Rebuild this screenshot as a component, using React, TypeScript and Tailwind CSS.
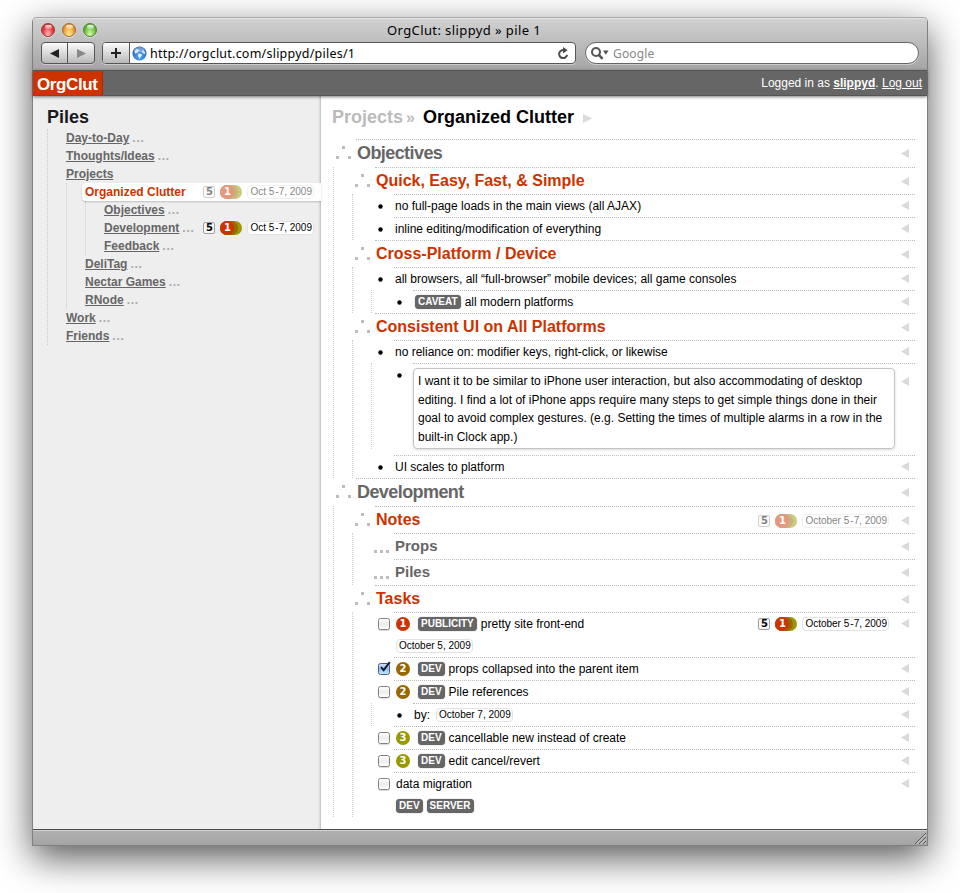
import type { ReactNode } from "react";
import clsx from "clsx";

/* ---------- small pieces ---------- */

function Light({ className }: { className: string }) {
  return (
    <span
      className={clsx(
        "block h-[14px] w-[14px] rounded-full border shadow-[0_1px_0_rgba(255,255,255,0.5)]",
        className,
      )}
    >
      <span className="mx-auto mt-[1px] block h-[4px] w-[7px] rounded-full bg-linear-to-b from-white/90 to-white/20" />
    </span>
  );
}

function Globe() {
  return (
    <svg width="15" height="15" viewBox="0 0 15 15" className="shrink-0">
      <defs>
        <radialGradient id="globe" cx="0.5" cy="0.7" r="0.75">
          <stop offset="0" stopColor="#5fb0f2" />
          <stop offset="0.55" stopColor="#2f78cf" />
          <stop offset="1" stopColor="#1c4c9c" />
        </radialGradient>
      </defs>
      <circle cx="7.5" cy="7.5" r="7" fill="url(#globe)" />
      <ellipse cx="7.5" cy="3.6" rx="4.8" ry="2.7" fill="#fff" opacity="0.35" />
      <path d="M2.2 5 4.4 3.2 7 3.4 7.6 4.6 6 5.4 6.2 6.6 4.6 7 3.4 8Z" fill="#dceafa" />
      <path d="M6.6 7.4 9.6 8 9.8 9.6 8.4 11 7.8 13 6.8 11.2 6 9Z" fill="#e8f4fd" />
      <path d="M10 4.2 12.2 4.600 13.400 7 12.400 8.200 10.800 7 9.600 6Z" fill="#cfe3f8" />
    </svg>
  );
}

function CountBox({ children }: { children: ReactNode }) {
  return (
    <span className="flex h-[12px] w-[12px] items-center justify-center rounded-[2px] border border-[#a0a0a0] bg-[#f8f8f8] font-['DejaVu_Sans',sans-serif] text-[10px] leading-none font-bold text-black">
      {children}
    </span>
  );
}

function PriorityStack() {
  return (
    <span className="flex h-[14px] w-[22px] rounded-full bg-[#999900]">
      <span className="flex h-[14px] w-[18px] rounded-full bg-[#996600]">
        <span className="flex h-[14px] w-[14px] items-center justify-center rounded-full bg-[#cc3300] font-['DejaVu_Sans',sans-serif] text-[10px] leading-none font-bold text-white">
          1
        </span>
      </span>
    </span>
  );
}

function DateBox({ children }: { children: ReactNode }) {
  return (
    <span className="flex h-[14px] items-center rounded-[4px] border border-[#e2e2e2] bg-white pr-[1px] pl-[2px] text-[10px] leading-[12px] whitespace-nowrap text-black">
      {children}
    </span>
  );
}

function Summary({ month, faded }: { month: string; faded?: boolean }) {
  return (
    <span className={clsx("flex items-center", faded && "opacity-50")}>
      <CountBox>5</CountBox>
      <span className="w-[5px]" />
      <PriorityStack />
      <span className="w-[5px]" />
      <DateBox>
        {month} 5<span className="w-[1px]" />-7, 2009
      </DateBox>
    </span>
  );
}

function Tag({ children }: { children: ReactNode }) {
  return (
    <span className="flex h-[14px] items-center rounded-[4px] bg-[#666] px-[3px] text-[10px] leading-[14px] font-bold text-white shadow-[0_0_1px_#666]">
      {children}
    </span>
  );
}

const priorityColors: Record<number, string> = {
  1: "bg-[#cc3300]",
  2: "bg-[#996600]",
  3: "bg-[#999900]",
};

function Priority({ level }: { level: number }) {
  return (
    <span
      className={clsx(
        "mr-[8px] flex h-[14px] w-[14px] items-center justify-center rounded-full font-['DejaVu_Sans',sans-serif] text-[10px] leading-none font-bold text-white",
        priorityColors[level],
      )}
    >
      {level}
    </span>
  );
}

function Checkbox({ checked }: { checked?: boolean }) {
  return (
    <span
      className={clsx(
        "relative block h-[12px] w-[12px] rounded-[2.5px] border",
        checked
          ? "border-[#4a5d86] bg-linear-to-b from-[#cfe2f7] via-[#8fbcec] to-[#c4ecff]"
          : "border-[#808080] bg-linear-to-b from-white via-[#ececec] to-white shadow-[0_1px_1px_rgba(0,0,0,0.15)]",
      )}
    >
      {checked && (
        <svg width="13" height="13" viewBox="0 0 13 13" className="absolute -top-[3px] left-[0px]">
          <path d="M2 6 4.600 9.200 10.800 1.200" fill="none" stroke="#10182c" strokeWidth="1.900" />
        </svg>
      )}
    </span>
  );
}

type MarkerKind = "open" | "closed" | "bullet" | "box" | "checked";

function Marker({ kind }: { kind: MarkerKind }) {
  if (kind === "open")
    return (
      <svg width="15" height="13" viewBox="0 0 15 13" className="mt-[7px] ml-[21px]" fill="#bdbdbd">
        <path d="M6 0h3v3H6zM0 10h3v3H0zM12 10h3v3h-3z" />
      </svg>
    );
  if (kind === "closed")
    return (
      <svg width="15" height="3" viewBox="0 0 15 3" className="mt-[17px] ml-[21px]" fill="#bdbdbd">
        <path d="M0 0h3v3H0zM6 0h3v3H6zM12 0h3v3h-3z" />
      </svg>
    );
  if (kind === "bullet")
    return (
      <svg width="5" height="5" viewBox="0 0 5 5" className="mt-[10px] ml-[25px]">
        <circle cx="2.5" cy="2.5" r="2.2" />
      </svg>
    );
  return (
    <span className="mt-[6px] ml-[25px] block">
      <Checkbox checked={kind === "checked"} />
    </span>
  );
}

/* ---------- outline ---------- */

type Size = "h1" | "h2" | "h3" | "item";

const lineStyles: Record<Size, string> = {
  h1: "h-[27px] pl-px text-[18px] tracking-[-0.58px] font-bold text-[#666]",
  h2: "h-[26px] pl-px text-[16px] font-bold text-[#cc3300]",
  h3: "h-[25px] pl-px pb-px text-[15px] font-bold text-[#666]",
  item: "h-[22px] pl-px text-[12px] text-black",
};

const arrowOffsets: Record<Size, string> = {
  h1: "mt-[9px]",
  h2: "mt-[9px]",
  h3: "mt-[8px]",
  item: "mt-[6px]",
};

function Row({
  marker,
  size = "item",
  title,
  summary,
  below,
  children,
}: {
  marker: MarkerKind;
  size?: Size;
  title: ReactNode;
  summary?: ReactNode;
  below?: ReactNode;
  children?: ReactNode;
}) {
  return (
    <li>
      <div className="flex">
        <div className="w-[41px] shrink-0">
          <Marker kind={marker} />
        </div>
        <div className="flex grow border-t border-dotted border-[#bbb]">
          <div className="grow">
            <div className={clsx("flex items-center whitespace-nowrap", lineStyles[size])}>
              {title}
              {summary && (
                <div className={clsx("mr-[12px] ml-auto font-normal", size === "h2" && "pt-[2px]")}>
                  {summary}
                </div>
              )}
            </div>
            {below}
          </div>
          <Arrow className={arrowOffsets[size]} />
        </div>
      </div>
      {children && <ul className="ml-[18px] border-l border-dotted border-[#ccc]">{children}</ul>}
    </li>
  );
}

function Arrow({ className }: { className?: string }) {
  return (
    <svg width="8" height="9" viewBox="0 0 8 9" className={clsx("mr-[6px] shrink-0", className)}>
      <path d="M8 0v9L0 4.5z" fill="#dadada" />
    </svg>
  );
}

function Note() {
  return (
    <li className="mb-[6px] flex">
      <div className="w-[41px] shrink-0">
        <Marker kind="bullet" />
      </div>
      <div className="flex grow border-t border-dotted border-[#bbb]">
        <div className="mt-[4px] h-[81px] w-[482px] rounded-[4px] border border-[#c4c4c4] px-[4px] pt-[3px] text-[12px] leading-[18.6px] whitespace-nowrap shadow-[0_1px_3px_rgba(0,0,0,0.15)]">
          I want it to be similar to iPhone user interaction, but also accommodating of desktop
          <br />
          editing. I find a lot of iPhone apps require many steps to get simple things done in their
          <br />
          goal to avoid complex gestures. (e.g. Setting the times of multiple alarms in a row in the
          <br />
          built-in Clock app.)
        </div>
        <Arrow className="mt-[13px] ml-auto" />
      </div>
    </li>
  );
}

function Gap() {
  return <span className="w-[4px]" />;
}

function Outline() {
  return (
    <ul className="-ml-[7px] border-l border-transparent">
      <Row marker="open" size="h1" title="Objectives">
        <Row marker="open" size="h2" title="Quick, Easy, Fast, &amp; Simple">
          <Row marker="bullet" title="no full-page loads in the main views (all AJAX)" />
          <Row marker="bullet" title="inline editing/modification of everything" />
        </Row>
        <Row marker="open" size="h2" title="Cross-Platform / Device">
          <Row marker="bullet" title="all browsers, all “full-browser” mobile devices; all game consoles">
            <Row
              marker="bullet"
              title={
                <>
                  <span className="w-px" />
                  <Tag>CAVEAT</Tag>
                  <Gap />
                  all modern platforms
                </>
              }
            />
          </Row>
        </Row>
        <Row marker="open" size="h2" title="Consistent UI on All Platforms">
          <Row marker="bullet" title="no reliance on: modifier keys, right-click, or likewise">
            <Note />
          </Row>
          <Row marker="bullet" title="UI scales to platform" />
        </Row>
      </Row>
      <Row marker="open" size="h1" title="Development">
        <Row marker="open" size="h2" title="Notes" summary={<Summary month="October" faded />}>
          <Row marker="closed" size="h3" title="Props" />
          <Row marker="closed" size="h3" title="Piles" />
        </Row>
        <Row marker="open" size="h2" title="Tasks">
          <Row
            marker="box"
            title={
              <>
                <span className="w-px" />
                <Priority level={1} />
                <Tag>PUBLICITY</Tag>
                <Gap />
                pretty site front-end
              </>
            }
            summary={<Summary month="October" />}
            below={
              <div className="flex h-[22px] items-center pl-[2px]">
                <DateBox>October 5, 2009</DateBox>
              </div>
            }
          />
          <Row
            marker="checked"
            title={
              <>
                <span className="w-px" />
                <Priority level={2} />
                <Tag>DEV</Tag>
                <Gap />
                props collapsed into the parent item
              </>
            }
          />
          <Row
            marker="box"
            title={
              <>
                <span className="w-px" />
                <Priority level={2} />
                <Tag>DEV</Tag>
                <Gap />
                Pile references
              </>
            }
          >
            <Row
              marker="bullet"
              title={
                <>
                  by:
                  <span className="w-[6px]" />
                  <DateBox>October 7, 2009</DateBox>
                </>
              }
            />
          </Row>
          <Row
            marker="box"
            title={
              <>
                <span className="w-px" />
                <Priority level={3} />
                <Tag>DEV</Tag>
                <Gap />
                cancellable new instead of create
              </>
            }
          />
          <Row
            marker="box"
            title={
              <>
                <span className="w-px" />
                <Priority level={3} />
                <Tag>DEV</Tag>
                <Gap />
                edit cancel/revert
              </>
            }
          />
          <Row
            marker="box"
            title={
              <>
                <span className="w-px" />
                data migration
              </>
            }
            below={
              <div className="flex h-[22px] items-center gap-[4px] pl-[2px]">
                <Tag>DEV</Tag>
                <Tag>SERVER</Tag>
              </div>
            }
          />
        </Row>
      </Row>
    </ul>
  );
}

/* ---------- sidebar ---------- */

function Pile({
  name,
  more,
  active,
  summary,
  children,
}: {
  name: string;
  more?: boolean;
  active?: boolean;
  summary?: ReactNode;
  children?: ReactNode;
}) {
  return (
    <li>
      <div
        className={clsx(
          "flex h-[18px] items-center text-[12px] font-bold whitespace-nowrap",
          active
            ? "relative ml-[15px] rounded-l-[4px] bg-white pl-[3px] text-[#cc3300] shadow-[0_1px_2px_rgba(0,0,0,0.2)]"
            : "pl-[18px] text-[#666]",
        )}
      >
        <span className={clsx(!active && "underline underline-offset-[1px]")}>{name}</span>
        {more && <span className="pl-[3px] tracking-[0.7px] text-[#aaa]">...</span>}
        {summary && <span className="mr-[7px] ml-auto font-normal">{summary}</span>}
      </div>
      {children && <ul className="ml-[18px] border-l border-dotted border-[#ccc]">{children}</ul>}
    </li>
  );
}

function Sidebar() {
  return (
    <nav className="w-[288px] shrink-0 bg-[#eee] pl-[14px] shadow-[inset_-1px_0_0_#c8c8c8,inset_-4px_0_3px_-3px_rgba(0,0,0,0.2)]">
      <h2 className="h-[33px] pt-[9px] text-[18px] leading-[24px] font-bold text-[#1a1a1a]">Piles</h2>
      <ul className="border-l border-dotted border-[#ccc]">
        <Pile name="Day-to-Day" more />
        <Pile name="Thoughts/Ideas" more />
        <Pile name="Projects">
          <Pile name="Organized Clutter" active summary={<Summary month="Oct" faded />}>
            <Pile name="Objectives" more />
            <Pile name="Development" more summary={<Summary month="Oct" />} />
            <Pile name="Feedback" more />
          </Pile>
          <Pile name="DeliTag" more />
          <Pile name="Nectar Games" more />
          <Pile name="RNode" more />
        </Pile>
        <Pile name="Work" more />
        <Pile name="Friends" more />
      </ul>
    </nav>
  );
}

/* ---------- window chrome ---------- */

function TitleBar() {
  return (
    <div className="h-[53px] rounded-t-[4px] border-t border-[#aaa] bg-linear-to-b from-[#d2d2d2] to-[#a5a5a5] font-['Noto_Sans',sans-serif] text-[13px] text-black shadow-[inset_0_1px_0_#e4e4e4]">
      <div className="grid h-[24px] grid-cols-[120px_1fr_153px] items-center">
        <div className="flex gap-[7px] pl-[8px]">
          <Light className="border-[#a03434] bg-radial-[at_50%_90%] from-[#ffc4c4] via-[#ec4b50] to-[#b01c20]" />
          <Light className="border-[#a8692a] bg-radial-[at_50%_90%] from-[#fff08a] via-[#f2ae45] to-[#c06a14]" />
          <Light className="border-[#4d8433] bg-radial-[at_50%_90%] from-[#dcffa8] via-[#80cc55] to-[#3d8c1f]" />
        </div>
        <div className="-mt-px pl-px text-center leading-[18px] tracking-[0.4px]">OrgClut: slippyd » pile 1</div>
      </div>
      <div className="flex h-[22px] pr-[8px] pl-[8px]">
        <div className="flex w-[54px] rounded-[4px] border border-[#555] bg-linear-to-b from-[#fcfcfc] to-[#b9b9b9] shadow-[0_1px_0_rgba(255,255,255,0.4)]">
          <span className="flex w-[26px] items-center justify-center border-r border-[#555]">
            <svg width="9" height="9" viewBox="0 0 9 9">
              <path d="M9 0v9L0 4.500z" fill="#222" />
            </svg>
          </span>
          <span className="flex grow items-center justify-center">
            <svg width="9" height="9" viewBox="0 0 9 9">
              <path d="M0 0v9L9 4.500z" fill="#888" />
            </svg>
          </span>
        </div>
        <div className="ml-[7px] flex w-[474px] rounded-[4px] border border-[#555] bg-white shadow-[0_1px_0_rgba(255,255,255,0.4)]">
          <span className="flex w-[27px] items-center justify-center rounded-l-[3px] border-r border-[#555] bg-linear-to-b from-[#fcfcfc] to-[#b9b9b9]">
            <svg width="10" height="10" viewBox="0 0 10 10">
              <path d="M4 0h2v4h4v2H6v4H4V6H0V4h4z" fill="#222" />
            </svg>
          </span>
          <span className="flex grow items-center pl-[2px]">
            <Globe />
            <span className="pt-px pl-[3px] text-[12.5px] leading-[18px] tracking-[0.23px]">
              http://orgclut.com/slippyd/piles/1
            </span>
            <svg width="12" height="13" viewBox="0 0 12 13" className="mr-[6px] ml-auto">
              <path d="M7 3.200A4 4 0 1 0 10.100 7.800" fill="none" stroke="#4a4a4a" strokeWidth="2" />
              <path d="M6 0 10.600 3.300 6 6.600z" fill="#4a4a4a" />
            </svg>
          </span>
        </div>
        <div className="ml-[9px] flex grow items-center rounded-full border border-[#666] bg-white pl-[5px] shadow-[0_1px_0_rgba(255,255,255,0.4)]">
          <svg width="18" height="13" viewBox="0 0 18 13">
            <circle cx="5" cy="5" r="4" fill="none" stroke="#555" strokeWidth="2" />
            <path d="M7.800 7.800 11.600 11.800" stroke="#555" strokeWidth="2.600" />
            <path d="M12 3.500h5.600l-2.800 4.300z" fill="#555" />
          </svg>
          <span className="pt-px pl-[4px] text-[12px] leading-[18px] tracking-[0.15px] text-[#888]">Google</span>
        </div>
      </div>
    </div>
  );
}

export default function App() {
  return (
    <div className="h-[893px] w-[960px] overflow-hidden bg-white pt-[17px] pl-[32px] font-['Liberation_Sans',Arial,sans-serif]">
      <div className="flex h-[829px] w-[896px] flex-col rounded-t-[5px] border-x border-b border-[#808080] shadow-[0_12px_36px_rgba(0,0,0,0.66)]">
        <TitleBar />
        <header className="relative z-10 flex h-[26px] justify-between border-y border-[#555] bg-[#666] text-white shadow-[0_1px_3px_rgba(0,0,0,0.5)]">
          <div className="w-[70px] border-r border-[#a82a00] bg-[#cc3300] pl-[4px] text-[17px] leading-[27px] font-bold tracking-[-0.4px]">
            OrgClut
          </div>
          <div className="pr-[5px] text-[12px] leading-[24px]">
            Logged in as <b className="underline">slippyd</b>. <span className="underline">Log out</span>
          </div>
        </header>
        <div className="flex h-[733px]">
          <Sidebar />
          <main className="grow bg-white pr-[12px]">
            <h1 className="flex h-[43px] items-center pl-[11px] text-[18px] font-bold whitespace-nowrap text-black">
              <span className="text-[#bbb]">Projects</span>
              <span className="pl-[3px] text-[16px] text-[#bbb]">»</span>
              <span className="pl-[8px]">Organized Clutter</span>
              <svg width="9" height="9" viewBox="0 0 9 9" className="mt-[2px] ml-[9px]">
                <path d="M0 0v9L9 4.500z" fill="#dadada" />
              </svg>
            </h1>
            <Outline />
          </main>
        </div>
        <footer className="flex grow items-end justify-end border-t border-[#4c4c4c] bg-linear-to-b from-[#b2b2b2] to-[#a4a4a4] shadow-[inset_0_1px_0_#cfcfcf]">
          <svg width="12" height="12" viewBox="0 0 12 12" className="mr-px mb-px">
            <path d="M1 12 12 1M5 12 12 5M9 12 12 9" stroke="#555" strokeWidth="1" />
            <path d="M2 12.500 12 2.500M6 12.500 12 6.500M10 12.500 12 10.500" stroke="#ddd" strokeWidth="0.800" />
          </svg>
        </footer>
      </div>
    </div>
  );
}
